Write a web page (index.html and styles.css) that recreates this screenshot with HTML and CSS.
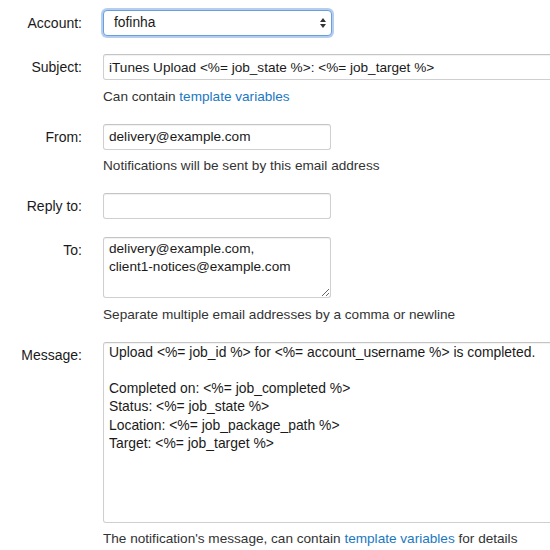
FILE: index.html
```html
<!DOCTYPE html>
<html>
<head>
<meta charset="utf-8">
<link rel="stylesheet" href="styles.css">
</head>
<body>
<form class="form">
  <div class="row">
    <label class="label">Account:</label>
    <div class="control">
      <div class="select-wrap">
        <select class="select"><option>fofinha</option></select>
        <svg class="select-arrows" width="8" height="12" viewBox="0 0 8 12"><path d="M4 1 L7 5 H1 Z M4 11 L7 7 H1 Z" fill="#333"/></svg>
      </div>
    </div>
  </div>
  <div class="row">
    <label class="label">Subject:</label>
    <div class="control">
      <input class="input wide" type="text" value="iTunes Upload &lt;%= job_state %&gt;: &lt;%= job_target %&gt;">
      <p class="help">Can contain <a class="link" href="#">template variables</a></p>
    </div>
  </div>
  <div class="row">
    <label class="label">From:</label>
    <div class="control">
      <input class="input" type="text" value="delivery@example.com">
      <p class="help">Notifications will be sent by this email address</p>
    </div>
  </div>
  <div class="row">
    <label class="label">Reply to:</label>
    <div class="control">
      <input class="input" type="text" value="">
    </div>
  </div>
  <div class="row">
    <label class="label label-top">To:</label>
    <div class="control">
      <textarea class="textarea to">delivery@example.com,
client1-notices@example.com</textarea>
      <p class="help">Separate multiple email addresses by a comma or newline</p>
    </div>
  </div>
  <div class="row">
    <label class="label label-top">Message:</label>
    <div class="control">
      <textarea class="textarea message">Upload &lt;%= job_id %&gt; for &lt;%= account_username %&gt; is completed.

Completed on: &lt;%= job_completed %&gt;
Status: &lt;%= job_state %&gt;
Location: &lt;%= job_package_path %&gt;
Target: &lt;%= job_target %&gt;</textarea>
      <p class="help">The notification's message, can contain <a class="link" href="#">template variables</a> for details</p>
    </div>
  </div>
</form>
</body>
</html>
```
FILE: styles.css
```css
html, body {
  margin: 0;
  padding: 0;
  background: #fff;
  overflow: hidden;
}
body {
  font-family: "Liberation Sans", Arial, sans-serif;
  font-size: 13.6px;
  line-height: 18px;
  color: #333;
}
.form {
  display: flex;
  flex-direction: column;
  gap: 18px;
  padding-top: 10px;
}
.row {
  display: flex;
  align-items: flex-start;
}
.label {
  width: 82px;
  flex: none;
  text-align: right;
  padding-right: 21px;
  font-size: 14px;
  line-height: 26px;
  color: #1a1a1a;
}
.label-top {
  line-height: 18px;
  padding-top: 4px;
}
.control {
  display: flex;
  flex-direction: column;
  align-items: flex-start;
}
.select-wrap {
  position: relative;
}
.select {
  appearance: none;
  -webkit-appearance: none;
  box-sizing: border-box;
  width: 229px;
  height: 26px;
  margin: 0;
  padding: 0 10px;
  font: inherit;
  font-size: 13.8px;
  color: #1a1a1a;
  background: #fff;
  border: 1px solid #6a9fdc;
  border-radius: 4px;
  box-shadow: 0 0 0 2px rgba(120, 165, 225, 0.55);
  outline: none;
}
.select-arrows {
  position: absolute;
  right: 5px;
  top: 7px;
}
.input {
  box-sizing: border-box;
  width: 228px;
  height: 26px;
  margin: 0;
  padding: 0 5px;
  font: inherit;
  font-size: 13.6px;
  color: #1a1a1a;
  background: #fff;
  border: 1px solid #cfcfcf;
  border-top-color: #c4c4c4;
  border-radius: 3px;
  box-shadow: inset 0 1px 1px rgba(0, 0, 0, 0.06);
  outline: none;
}
.input.wide {
  width: 470px;
}
.textarea {
  box-sizing: border-box;
  margin: 0;
  padding: 2px 5px;
  font: inherit;
  font-size: 13.6px;
  line-height: 18px;
  color: #1a1a1a;
  background: #fff;
  border: 1px solid #cfcfcf;
  border-top-color: #c4c4c4;
  border-radius: 3px;
  box-shadow: inset 0 1px 1px rgba(0, 0, 0, 0.06);
  outline: none;
  resize: vertical;
}
.textarea.to {
  width: 228px;
  height: 61px;
  resize: both;
}
.textarea.message {
  width: 470px;
  height: 181px;
  padding-top: 0;
  font-size: 13.9px;
  line-height: 18.3px;
}
.help {
  margin: 7.5px 0 0;
  line-height: 18px;
  color: #333;
}
.link {
  color: #1a78c2;
  text-decoration: none;
}
```
